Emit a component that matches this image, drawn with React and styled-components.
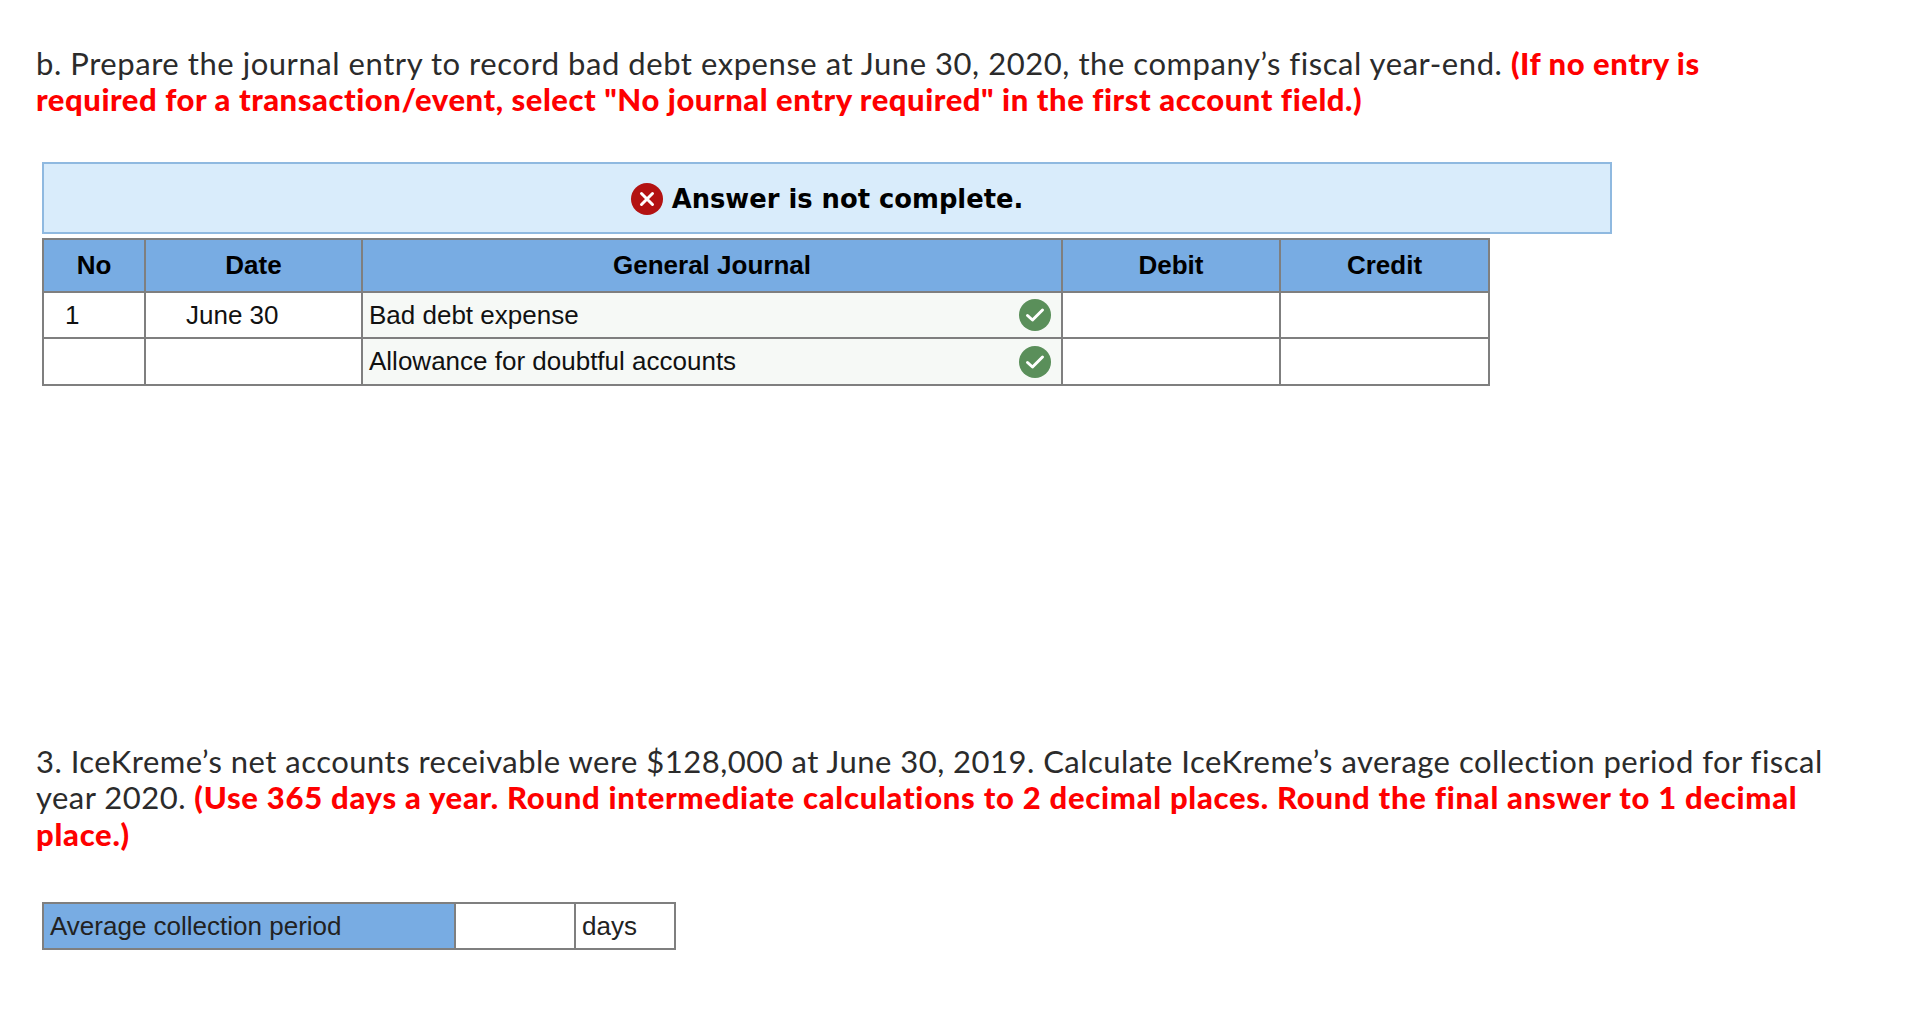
import React from "react";
import styled, { createGlobalStyle } from "styled-components";

const GlobalStyle = createGlobalStyle`
  html, body { margin: 0; background: #fff; }
  body { font-family: "Lato", "Liberation Sans", sans-serif; }
`;

const Page = styled.div`
  width: 1920px;
  height: 1010px;
  box-sizing: border-box;
  padding: 45px 0 0 36px;
  overflow: hidden;
`;

const Question = styled.p`
  margin: 0;
  width: 1850px;
  font-size: 31px;
  line-height: 36.4px;
  letter-spacing: 0.55px;
  color: #2b2b2b;
`;

const LowerQuestion = styled(Question)`
  margin-top: 357px;
  letter-spacing: 0.48px;
`;

const Hint = styled.strong`
  font-weight: 900;
  color: #fe0000;
  letter-spacing: ${(p) => p.$spacing || 0.55}px;
`;

const Banner = styled.div`
  box-sizing: border-box;
  width: 1570px;
  height: 72px;
  margin: 44px 0 0 6px;
  padding-top: 3px;
  display: flex;
  align-items: center;
  justify-content: center;
  gap: 9px;
  background: #d9ecfb;
  border: 2px solid #8fb9e0;
`;

const BannerText = styled.span`
  font-family: "DejaVu Sans", sans-serif;
  font-weight: 700;
  font-size: 25.8px;
  color: #000;
`;

const Sheet = styled.table`
  border-collapse: collapse;
  table-layout: fixed;
  margin-left: 6px;
  font-family: "Liberation Sans", Arial, sans-serif;
  font-size: 26px;
  color: #111;
`;

const JournalSheet = styled(Sheet)`
  width: 1446px;
  margin-top: 4px;
`;

const AnswerSheet = styled(Sheet)`
  width: 632px;
  margin-top: 50px;
`;

const Head = styled.th`
  box-sizing: border-box;
  height: 53px;
  padding: 0;
  width: ${(p) => p.$w}px;
  background: #78ace3;
  border: 2px solid #7f7f7f;
  font-weight: 700;
  text-align: center;
  color: #000;
`;

const Cell = styled.td`
  box-sizing: border-box;
  height: 46.5px;
  padding: 0 0 0 ${(p) => p.$pad || 0}px;
  border: 2px solid #7f7f7f;
  background: #fff;
`;

const AccountCell = styled(Cell)`
  padding: 0 10px 0 6px;
  background: #f6f9f6;
`;

const Account = styled.div`
  display: flex;
  align-items: center;
  justify-content: space-between;
`;

const LabelCell = styled(Cell)`
  height: 46px;
  width: ${(p) => p.$w}px;
  background: ${(p) => p.$fill || "#fff"};
  color: #222;
`;

const Status = styled.svg`
  display: block;
  flex: none;
`;

function WrongIcon() {
  return (
    <Status width="32" height="32" viewBox="0 0 32 32">
      <circle cx="16" cy="16" r="16" fill="#b31212" />
      <path d="M10.5 10.5 L21.5 21.5 M21.5 10.5 L10.5 21.5" stroke="#fff" strokeWidth="3" strokeLinecap="round" />
    </Status>
  );
}

function RightIcon() {
  return (
    <Status width="32" height="32" viewBox="0 0 32 32">
      <circle cx="16" cy="16" r="16" fill="#5a8f5a" />
      <path d="M8.5 16.5 L13.5 21 L23.5 11" fill="none" stroke="#fff" strokeWidth="3" strokeLinecap="round" strokeLinejoin="round" />
    </Status>
  );
}

const rows = [
  { no: "1", date: "June 30", account: "Bad debt expense" },
  { no: "", date: "", account: "Allowance for doubtful accounts" },
];

export default function App() {
  return (
    <Page>
      <GlobalStyle />
      <Question>
        b. Prepare the journal entry to record bad debt expense at June 30, 2020, the company’s fiscal year-end.{" "}
        <Hint>
          (If no entry is
          <br />
          required for a transaction/event, select "No journal entry required" in the first account field.)
        </Hint>
      </Question>

      <Banner>
        <WrongIcon />
        <BannerText>Answer is not complete.</BannerText>
      </Banner>

      <JournalSheet>
        <thead>
          <tr>
            <Head $w={102}>No</Head>
            <Head $w={217}>Date</Head>
            <Head $w={700}>General Journal</Head>
            <Head $w={218}>Debit</Head>
            <Head $w={209}>Credit</Head>
          </tr>
        </thead>
        <tbody>
          {rows.map((row) => (
            <tr key={row.account}>
              <Cell $pad={21}>{row.no}</Cell>
              <Cell $pad={40}>{row.date}</Cell>
              <AccountCell>
                <Account>
                  {row.account}
                  <RightIcon />
                </Account>
              </AccountCell>
              <Cell />
              <Cell />
            </tr>
          ))}
        </tbody>
      </JournalSheet>

      <LowerQuestion>
        3. IceKreme’s net accounts receivable were $128,000 at June 30, 2019. Calculate IceKreme’s average collection period for fiscal
        <br />
        year 2020.{" "}
        <Hint $spacing={0.73}>
          (Use 365 days a year. Round intermediate calculations to 2 decimal places. Round the final answer to 1 decimal
          <br />
          place.)
        </Hint>
      </LowerQuestion>

      <AnswerSheet>
        <tbody>
          <tr>
            <LabelCell $w={412} $pad={6} $fill="#78ace3">Average collection period</LabelCell>
            <LabelCell $w={120} />
            <LabelCell $w={100} $pad={6}>days</LabelCell>
          </tr>
        </tbody>
      </AnswerSheet>
    </Page>
  );
}
